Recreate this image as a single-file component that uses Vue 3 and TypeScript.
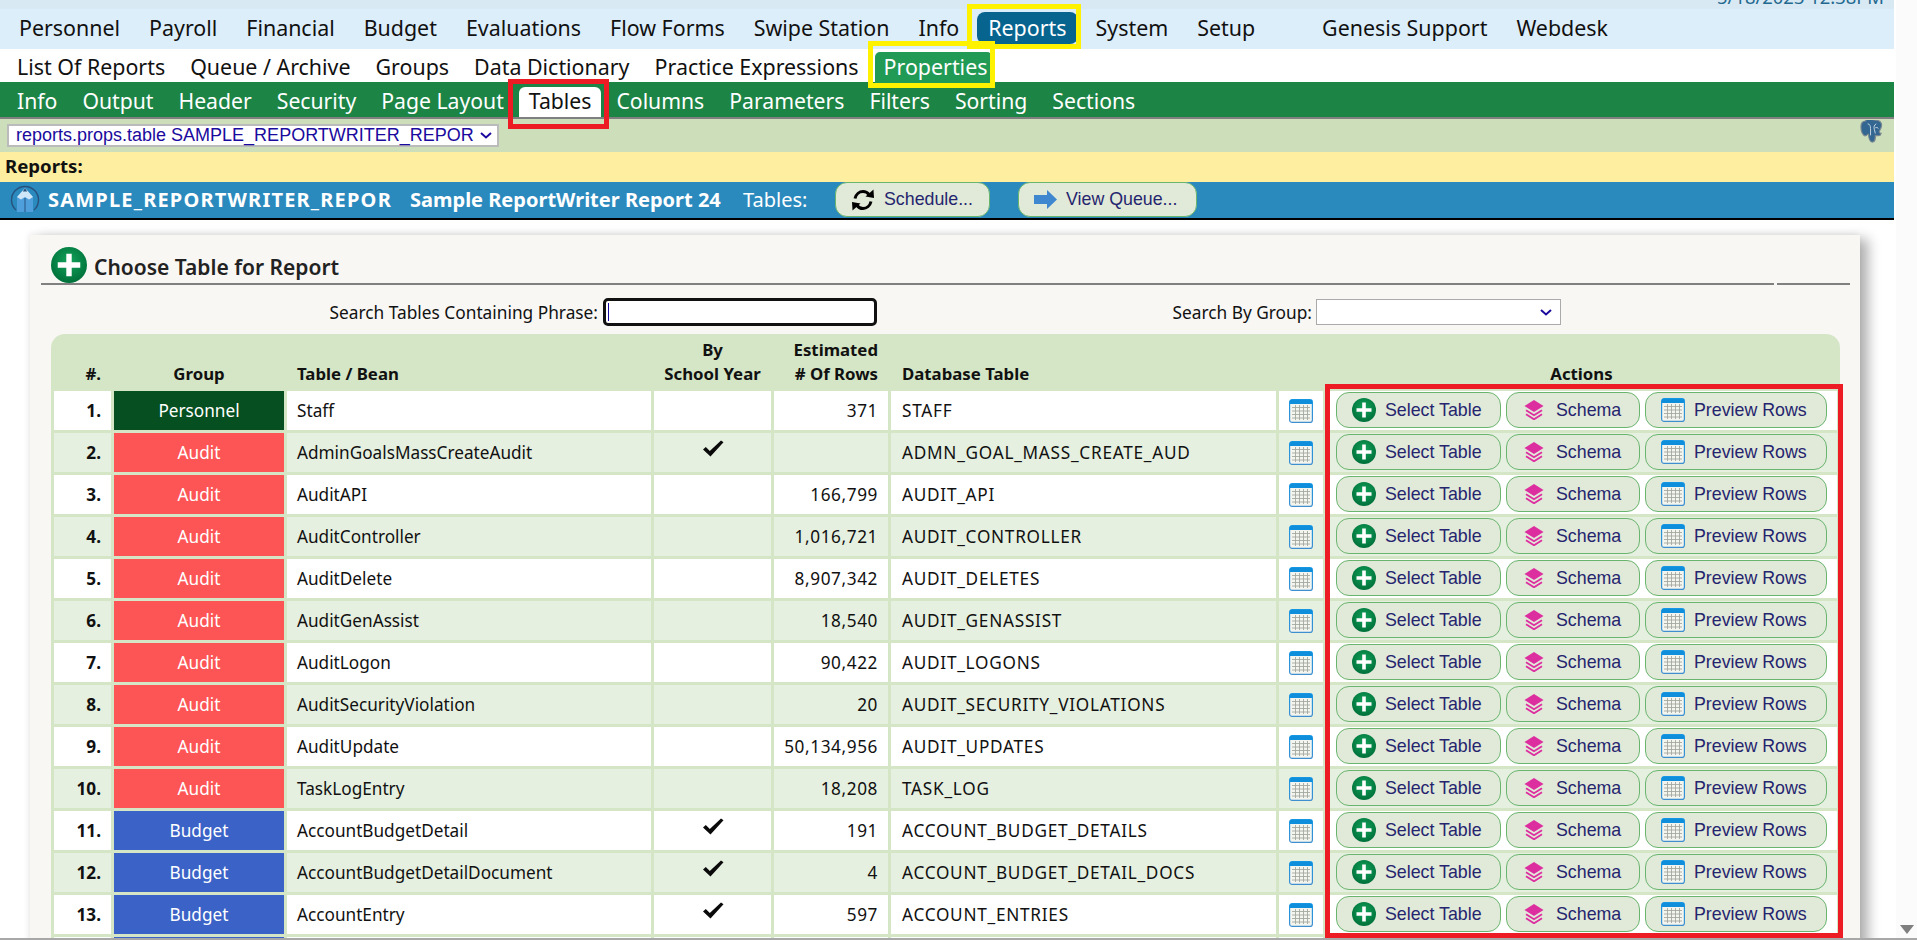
<script setup lang="ts">
interface Row { n: number; group: string; bean: string; sy: boolean; rows: string; db: string }
const g1 = ['Personnel','Payroll','Financial','Budget','Evaluations','Flow Forms','Swipe Station','Info','Reports','System','Setup','Genesis Support','Webdesk']
const g2 = ['List Of Reports','Queue / Archive','Groups','Data Dictionary','Practice Expressions','Properties']
const g3 = ['Info','Output','Header','Security','Page Layout','Tables','Columns','Parameters','Filters','Sorting','Sections']
const raw: [string,string,boolean,string,string][] = [
  ['Personnel','Staff',false,'371','STAFF'],
  ['Audit','AdminGoalsMassCreateAudit',true,'','ADMN_GOAL_MASS_CREATE_AUD'],
  ['Audit','AuditAPI',false,'166,799','AUDIT_API'],
  ['Audit','AuditController',false,'1,016,721','AUDIT_CONTROLLER'],
  ['Audit','AuditDelete',false,'8,907,342','AUDIT_DELETES'],
  ['Audit','AuditGenAssist',false,'18,540','AUDIT_GENASSIST'],
  ['Audit','AuditLogon',false,'90,422','AUDIT_LOGONS'],
  ['Audit','AuditSecurityViolation',false,'20','AUDIT_SECURITY_VIOLATIONS'],
  ['Audit','AuditUpdate',false,'50,134,956','AUDIT_UPDATES'],
  ['Audit','TaskLogEntry',false,'18,208','TASK_LOG'],
  ['Budget','AccountBudgetDetail',true,'191','ACCOUNT_BUDGET_DETAILS'],
  ['Budget','AccountBudgetDetailDocument',true,'4','ACCOUNT_BUDGET_DETAIL_DOCS'],
  ['Budget','AccountEntry',true,'597','ACCOUNT_ENTRIES'],
]
const rows: Row[] = raw.map((r, i) => ({ n: i + 1, group: r[0], bean: r[1], sy: r[2], rows: r[3], db: r[4] }))
</script>

<template>
  <div class="page">
    <svg class="defs" width="0" height="0" aria-hidden="true">
      <defs>
        <radialGradient id="gp" cx="50%" cy="40%" r="60%">
          <stop offset="0%" stop-color="#12a35a" />
          <stop offset="100%" stop-color="#00703a" />
        </radialGradient>
        <linearGradient id="gc" x1="0" y1="0" x2="0" y2="1">
          <stop offset="0%" stop-color="#1697e4" />
          <stop offset="100%" stop-color="#3f8fcf" />
        </linearGradient>
        <symbol id="plus" viewBox="0 0 24 24">
          <circle cx="12" cy="12" r="12" fill="url(#gp)" />
          <path d="M10.2 4.5h3.6v5.7h5.7v3.6h-5.7v5.7h-3.6v-5.7H4.5v-3.6h5.7z" fill="#fff" />
        </symbol>
        <symbol id="cal" viewBox="0 0 24 24">
          <rect x="0.6" y="0.6" width="22.8" height="22.8" rx="2.5" fill="#f4f5ef" stroke="url(#gc)" stroke-width="1.2" />
          <rect x="1" y="1" width="22" height="4" fill="#0f8edb" />
          <path d="M3 8.500h18M3 12h18M3 15.500h18M3 19h18M6.500 6v15M10.500 6v15M14.500 6v15M18.500 6v15" stroke="#a3a89f" stroke-width="0.9" fill="none" />
        </symbol>
        <symbol id="layers" viewBox="0 0 20 20">
          <path d="M10 0l9.500 6-9.500 6-9.500-6z" fill="#dd2ea0" />
          <path d="M2 10.300l8 5 8-5M2 14.300l8 5 8-5" fill="none" stroke="#dd2ea0" stroke-width="1.800" />
        </symbol>
        <symbol id="check" viewBox="0 0 22 17">
          <path d="M1 9.500l2.800-2.600 4 4.200L19 0.400l2.500 1.800L8.500 16.600z" fill="#0a0a0a" />
        </symbol>
        <symbol id="chev" viewBox="0 0 12 7">
          <path d="M1 1l5 4.500L11 1" fill="none" stroke="#1a0a9e" stroke-width="2" />
        </symbol>
      </defs>
    </svg>

    <div class="main">
      <div class="strip"><span class="date">5/18/2023 12:38PM</span></div>
      <nav class="nav1">
        <a v-for="t in g1" :key="t" class="n1" :class="{ on: t === 'Reports', far: t === 'Genesis Support' }">{{ t }}</a>
      </nav>
      <nav class="nav2">
        <a v-for="t in g2" :key="t" class="n2" :class="{ on: t === 'Properties' }">{{ t }}</a>
      </nav>
      <nav class="nav3">
        <a v-for="t in g3" :key="t" class="n3" :class="{ on: t === 'Tables' }">{{ t }}</a>
      </nav>
      <div class="selbar">
        <div class="rsel">
          <span>reports.props.table SAMPLE_REPORTWRITER_REPOR</span>
          <svg width="12" height="7" aria-hidden="true"><use href="#chev" /></svg>
        </div>
        <svg class="pg" viewBox="0 0 24 25" width="23" height="24" aria-hidden="true">
          <path d="M6 1C3 1 1 3 1 7c0 4 1 7 3 9 1 1 3 0 4-1h1c0 3 1 8 4 8s3-3 3-7c2 0 3 1 5 0l1-2c-1 0-2-1-2-2 2-3 3-7 2-9-1-2-4-3-7-3-2-1-7-1-9 0z" fill="#336791" stroke="#7b8790" stroke-width="1.200" />
          <path d="M8 4c2 0 3 2 3 5v7M17 4c-2 1-3 3-2 6l1 4M16 8c2-.5 3 0 3 1" stroke="#d5e3ee" stroke-width="0.900" fill="none" />
        </svg>
      </div>
      <div class="crumb">Reports:</div>
      <div class="titlebar">
        <svg class="logo" viewBox="0 0 30 30" width="30" height="30" aria-hidden="true">
          <path d="M6 25A13.500 13.500 0 1 1 24 25" fill="none" stroke="#27527f" stroke-width="1.500" />
          <path d="M15 3l8 9v15H7V12z" fill="#4f9fdc" />
          <path d="M15 3l8 9-4 2.500-4-2.500-4 2.500-4-2.500z" fill="#cfe6f8" />
          <path d="M15 3l2.200 3.500h-4.400z" fill="#27527f" />
          <path d="M15 13v14" stroke="#27527f" stroke-width="1" />
        </svg>
        <span class="tb1">SAMPLE_REPORTWRITER_REPOR</span>
        <span class="tb2">Sample ReportWriter Report 24</span>
        <span class="tb3">Tables:</span>
        <button class="tbtn sch">
          <svg viewBox="0 0 24 22" width="24" height="22" aria-hidden="true">
            <path d="M4 9.500C5 5 8.500 2.500 12 2.500c2.500 0 4.500 1 6 3" fill="none" stroke="#000" stroke-width="3" />
            <path d="M14.500 7.500L23 9l-.5-8.500z" fill="#000" />
            <path d="M20 12.500c-1 4.500-4.500 7-8 7-2.500 0-4.500-1-6-3" fill="none" stroke="#000" stroke-width="3" />
            <path d="M9.500 14.500L1 13l.5 8.500z" fill="#000" />
          </svg>
          <span>Schedule...</span>
        </button>
        <button class="tbtn vq">
          <svg viewBox="0 0 23 19" width="23" height="19" aria-hidden="true">
            <path d="M0 5h13V0l10 9.500L13 19v-5H0z" fill="#3f88cf" />
          </svg>
          <span>View Queue...</span>
        </button>
      </div>

      <section class="card">
        <header class="cardhead">
          <svg class="bigplus" width="36" height="36" aria-hidden="true"><use href="#plus" /></svg>
          <h2>Choose Table for Report</h2>
        </header>
        <div class="search">
          <label class="l1">Search Tables Containing Phrase:</label>
          <span class="sinput"><i class="caret"></i></span>
          <label class="l2">Search By Group:</label>
          <div class="gsel"><svg width="12" height="7" aria-hidden="true"><use href="#chev" /></svg></div>
        </div>
        <div class="panel">
          <div class="grid ghead">
            <div class="r pr">#.</div>
            <div class="c">Group</div>
            <div class="l">Table / Bean</div>
            <div class="c">By<br />School Year</div>
            <div class="r">Estimated<br /># Of Rows</div>
            <div class="l db">Database Table</div>
            <div></div>
            <div class="c">Actions</div>
          </div>
          <div v-for="(r, i) in rows" :key="r.n" class="grid row" :class="{ alt: i % 2 === 1 }">
            <div class="cell r pr num">{{ r.n }}.</div>
            <div class="cell c grp" :class="r.group.toLowerCase()">{{ r.group }}</div>
            <div class="cell l">{{ r.bean }}</div>
            <div class="cell c ck"><svg v-if="r.sy" width="22" height="17" aria-hidden="true"><use href="#check" /></svg></div>
            <div class="cell r digits">{{ r.rows }}</div>
            <div class="cell l caps">{{ r.db }}</div>
            <div class="cell c"><svg width="24" height="24" aria-hidden="true"><use href="#cal" /></svg></div>
            <div class="cell acts">
              <button class="act a1"><svg width="24" height="24" aria-hidden="true"><use href="#plus" /></svg><span>Select Table</span></button>
              <button class="act a2"><svg width="20" height="20" aria-hidden="true"><use href="#layers" /></svg><span>Schema</span></button>
              <button class="act a3"><svg width="24" height="24" aria-hidden="true"><use href="#cal" /></svg><span>Preview Rows</span></button>
            </div>
          </div>
          <div class="grid row">
            <div class="cell"></div><div class="cell grp budget"></div><div class="cell"></div><div class="cell"></div>
            <div class="cell"></div><div class="cell"></div><div class="cell"></div><div class="cell"></div>
          </div>
        </div>
      </section>
    </div>

    <div class="rail"><i class="arrow"></i></div>

    <div class="mark y1"></div>
    <div class="mark y2"></div>
    <div class="mark r1"></div>
    <div class="mark r2"></div>
    <div class="bottomline"></div>
  </div>
</template>

<style>
html, body { margin: 0; height: 100%; overflow: hidden; background: #fff; }
</style>

<style scoped>
.page { position: relative; display: flex; width: 1917px; height: 940px; overflow: hidden; background: #fff; font-family: "Noto Sans", "Open Sans", sans-serif; color: #111; }
.defs { position: absolute; }
.main { width: 1894px; flex: none; }
.rail { flex: 1; margin-left: 2px; background: #fbfbfb; position: relative; }
.arrow { position: absolute; left: 4px; top: 925px; width: 0; height: 0; border-left: 7px solid transparent; border-right: 7px solid transparent; border-top: 9px solid #7f7f7f; }
.strip { height: 9px; background: #d9e9f3; overflow: hidden; display: flex; justify-content: flex-end; }
.date { font-size: 18.400px; line-height: 20px; margin-top: -13px; margin-right: 10px; color: #23688f; }
.nav1 { height: 40px; background: #ddeefb; display: flex; gap: 7px; padding-left: 8px; box-sizing: border-box; padding-top: 3px; }
.n1 { height: 32px; padding: 0 11px; line-height: 32px; font-size: 21.400px; border-radius: 8px; }
.n1.on { background: #07648f; color: #fff; }
.n1.far { margin-left: 38px; }
.nav2 { height: 33px; background: #fff; display: flex; gap: 7px; padding-left: 8px; box-sizing: border-box; padding-top: 3px; }
.n2 { height: 31px; padding: 0 9px; line-height: 30px; font-size: 21.400px; border-radius: 5px 5px 0 0; }
.n2.on { background: #219a55; color: #fff; padding-right: 5px; }
.nav3 { height: 37px; background: #1c8445; border-bottom: 2px solid #808080; display: flex; gap: 5px; padding-left: 7px; box-sizing: border-box; padding-top: 5px; }
.n3 { height: 30px; padding: 0 10px; line-height: 28px; font-size: 21.200px; color: #fff; border-radius: 6px 6px 0 0; }
.n3.on { background: #fff; color: #111; }
.selbar { height: 33px; background: #cddfba; display: flex; justify-content: space-between; padding: 5px 11px 0 7px; box-sizing: border-box; align-items: flex-start; }
.rsel { width: 492px; height: 23px; box-sizing: border-box; border: 2px solid #bbb; background: #fff; color: #1a0a9e; font: 18px/19px "Liberation Sans", sans-serif; padding: 0 5px 0 7px; display: flex; align-items: center; justify-content: space-between; white-space: nowrap; }
.pg { margin-top: -4px; }
.crumb { height: 30px; line-height: 28px; background: #fdeea0; padding-left: 5px; font-size: 18.600px; font-weight: 700; }
.titlebar { height: 38px; box-sizing: border-box; background: #2b8abd; border-bottom: 2px solid #000; display: flex; align-items: center; color: #fff; font-size: 20px; padding: 0 0 1px 10px; }
.logo { margin-right: 8px; flex: none; }
.tb1, .tb2 { font-weight: 700; }
.tb1 { width: 362px; letter-spacing: 1.200px; white-space: nowrap; }
.tb2 { width: 333px; }
.tb3 { width: 92px; }
.tbtn { height: 35px; box-sizing: border-box; border: 1px solid #6ab56e; border-radius: 12px; background: #e1e9d8; display: flex; align-items: center; font: 17.800px "Liberation Sans", sans-serif; color: #25256f; padding: 0; }
.sch { width: 155px; padding-left: 15px; gap: 9px; }
.vq { width: 179px; margin-left: 28px; padding-left: 15px; gap: 9px; }
.card { margin: 15px 0 0 30px; width: 1830px; height: 800px; background: #f8f7f4; box-shadow: 8px 4px 12px rgba(0,0,0,.32), -2px -2px 6px rgba(0,0,0,.05); padding: 12px 0 0 11px; box-sizing: border-box; }
.cardhead { height: 38px; width: 1809px; display: flex; align-items: flex-start; box-sizing: border-box; background: linear-gradient(#808080,#808080) left bottom / 1733px 2px no-repeat, linear-gradient(#808080,#808080) right bottom / 73px 2px no-repeat; padding-left: 10px; }
.cardhead h2 { margin: 6px 0 0 7px; font-size: 21px; line-height: 28px; font-weight: 600; color: #222; }
.search { display: flex; align-items: center; height: 28px; margin-top: 13px; font-size: 17.300px; }
.l1 { width: 557px; text-align: right; }
.sinput { margin-left: 5px; width: 274px; height: 28px; box-sizing: border-box; border: 3px solid #111; border-radius: 5px; background: #fff; display: block; position: relative; }
.caret { position: absolute; left: 2px; top: 2px; width: 1px; height: 18px; background: #1a0a9e; }
.l2 { width: 435px; text-align: right; }
.gsel { margin-left: 4px; width: 245px; height: 26px; box-sizing: border-box; border: 1px solid #aaa; background: #fff; display: flex; align-items: center; justify-content: flex-end; padding-right: 8px; }
.panel { margin: 8px 0 0 10px; width: 1789px; background: #d5e6c6; border-radius: 14px 14px 0 0; padding: 0 3px; box-sizing: border-box; font-size: 17.200px; }
.grid { display: grid; grid-template-columns: 57px 170px 364px 117px 114px 385px 44px 511px; column-gap: 3px; }
.ghead { height: 57px; align-items: end; font-weight: 700; line-height: 24px; padding-bottom: 5px; box-sizing: border-box; color: #111; font-size: 16.800px; }
.row { height: 39px; margin-bottom: 3px; }
.cell { background: #fff; line-height: 39px; white-space: nowrap; }
.row.alt .cell { background: #e6f0e0; }
.c { text-align: center; }
.r { text-align: right; padding-right: 10px; }
.l { padding-left: 10px; }
.db, .caps { padding-left: 11px; }
.caps { letter-spacing: .75px; }
.digits { letter-spacing: .6px; }
.num { font-weight: 700; }
.row .cell.grp { color: #fff; }
.row .cell.personnel { background: #054f20; }
.row .cell.audit { background: #fd5555; }
.row .cell.budget { background: #3b62c7; }
.cell.c { display: flex; align-items: center; justify-content: center; }
.cell.ck { align-items: flex-start; padding-top: 7px; box-sizing: border-box; }
.acts { display: flex; gap: 5px; padding: 1px 0 0 10px; box-sizing: border-box; }
.act { height: 36px; box-sizing: border-box; border: 1px solid #6ab56e; border-radius: 13px; background: #e1e9d8; display: flex; align-items: center; font: 17.800px "Liberation Sans", sans-serif; color: #25256f; padding: 0; }
.a1 { width: 165px; padding-left: 15px; gap: 9px; }
.a2 { width: 134px; padding-left: 17px; gap: 12px; }
.a3 { width: 182px; padding-left: 15px; gap: 9px; }
.mark { position: absolute; box-sizing: border-box; pointer-events: none; }
.y1 { left: 967px; top: 4px; width: 114px; height: 45px; border: 5px solid #fff200; }
.y2 { left: 868px; top: 41px; width: 127px; height: 47px; border: 5px solid #fff200; }
.r1 { left: 508px; top: 79px; width: 101px; height: 50px; border: 5px solid #ed1c24; }
.r2 { left: 1325px; top: 384px; width: 518px; height: 554px; border: 5px solid #ed1c24; }
.bottomline { position: absolute; left: 0; right: 0; bottom: 0; height: 2px; background: #a8a8a8; }
</style>
